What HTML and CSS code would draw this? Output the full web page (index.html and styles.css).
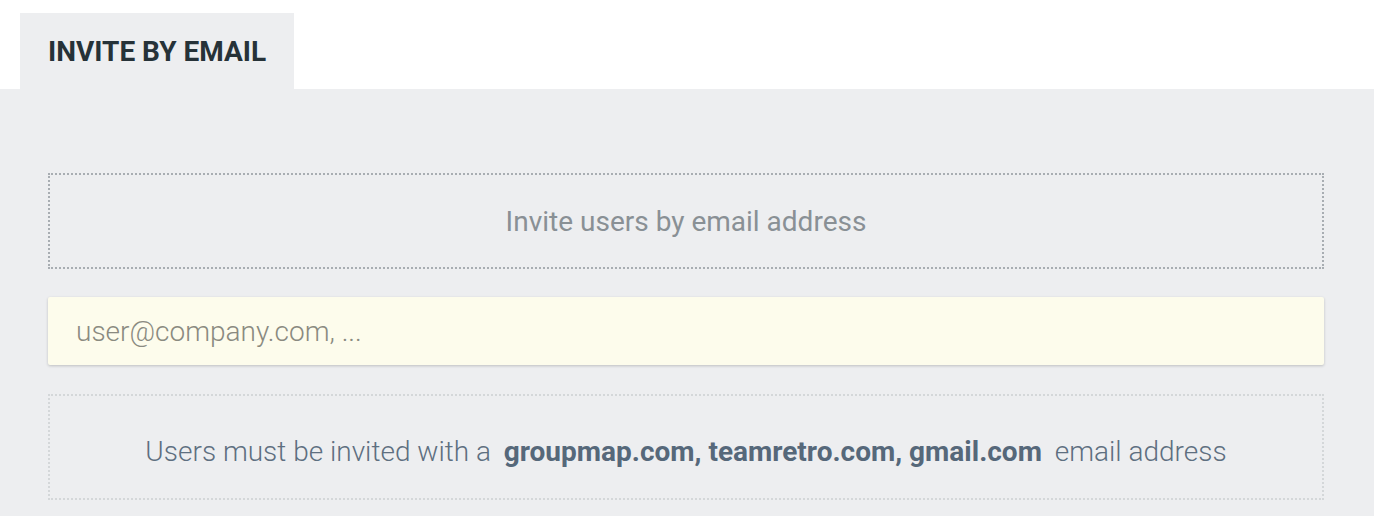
FILE: index.html
```html
<!DOCTYPE html>
<html lang="en">
<head>
    <meta charset="UTF-8">
    <meta name="viewport" content="width=device-width, initial-scale=1.0">
    <title>Invite by email</title>
    <link rel="stylesheet" href="styles.css">
</head>
<body>
    <nav class="tabs">
        <div class="tab ativa">INVITE BY EMAIL</div>
    </nav>

    <main class="painel">
        <div class="caixa-convite">Invite users by email address</div>

        <input class="campo-email" type="text" placeholder="user@company.com, ...">

        <div class="aviso">
            <p>Users must be invited with a <strong>groupmap.com, teamretro.com, gmail.com</strong> email address</p>
        </div>
    </main>
</body>
</html>
```

FILE: styles.css
```css
:root{
    --fundo: #edeef0;
    --texto: #263238;
    --cinza: #899095;
    --azulado: #5e6f80;
}

*{
    margin: 0;
    padding: 0;
    box-sizing: border-box;
}

body{
    background-color: #fff;
    font-family: Roboto, "Noto Sans", Arial, sans-serif;
    height: 516px;
    display: flex;
    flex-direction: column;
    overflow: hidden;
}

.tabs{
    display: flex;
    padding: 13px 0 0 20px;
}

.tab{
    height: 76px;
    width: 274px;
    padding-left: 28px;
    display: flex;
    align-items: center;
    font-size: 28px;
    font-weight: 700;
    color: var(--texto);
}

.ativa{
    background-color: var(--fundo);
}

.painel{
    flex: 1;
    background-color: var(--fundo);
    padding: 84px 50px 0 48px;
    display: flex;
    flex-direction: column;
}

.caixa-convite{
    height: 96px;
    border: 2px dotted #a8adb2;
    display: flex;
    justify-content: center;
    align-items: center;
    font-size: 28px;
    color: var(--cinza);
}

.campo-email{
    margin-top: 28px;
    height: 68px;
    border: none;
    border-radius: 2px;
    background-color: #fdfcec;
    box-shadow: 0 1px 3px rgba(0, 0, 0, 0.2);
    padding: 0 28px;
    font-family: inherit;
    font-size: 28px;
    font-weight: 300;
    color: var(--texto);
    outline: none;
}

.campo-email::placeholder{
    color: #8a8a80;
}

.aviso{
    margin-top: 29px;
    height: 106px;
    padding-top: 8px;
    border: 2px dotted #d4d7d9;
    display: flex;
    justify-content: center;
    align-items: center;
    font-size: 28px;
    font-weight: 300;
    color: var(--azulado);
}

.aviso p{
    text-align: center;
}

.aviso strong{
    font-weight: 700;
    color: #56687a;
    margin: 0 6px;
}
```
